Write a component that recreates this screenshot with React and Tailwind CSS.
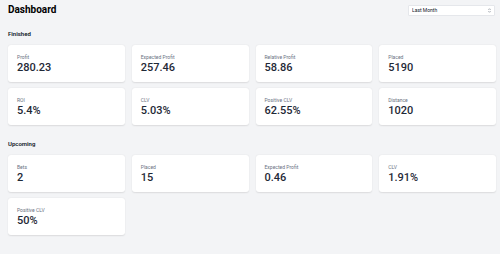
import { useState } from "react";

const finished = [
  { label: "Profit", value: "280.23" },
  { label: "Expected Profit", value: "257.46" },
  { label: "Relative Profit", value: "58.86" },
  { label: "Placed", value: "5190" },
  { label: "ROI", value: "5.4%" },
  { label: "CLV", value: "5.03%" },
  { label: "Positive CLV", value: "62.55%" },
  { label: "Distance", value: "1020" },
];

const upcoming = [
  { label: "Bets", value: "2" },
  { label: "Placed", value: "15" },
  { label: "Expected Profit", value: "0.46" },
  { label: "CLV", value: "1.91%" },
  { label: "Positive CLV", value: "50%" },
];

function StatCard({ label, value }) {
  return (
    <div className="h-[37px] bg-white rounded-[3px] shadow-[0_0.5px_1.5px_rgba(0,0,0,0.1)] px-[9px] flex flex-col justify-center">
      <div className="text-[5px] leading-[7px] text-gray-500">{label}</div>
      <div className="text-[11px] leading-[13px] font-medium text-[#1f2937]">
        {value}
      </div>
    </div>
  );
}

function Section({ title, stats }) {
  return (
    <div>
      <h2 className="text-[6px] leading-[8px] font-semibold text-gray-900 mb-[7px]">
        {title}
      </h2>
      <div className="grid grid-cols-4 gap-[6px] gap-x-[7px]">
        {stats.map((s, i) => (
          <StatCard key={i} label={s.label} value={s.value} />
        ))}
      </div>
    </div>
  );
}

export default function App() {
  const [range, setRange] = useState("Last Month");

  return (
    <div className="min-h-screen bg-gray-100 pl-2 pr-1 pt-[3px] font-['Roboto',sans-serif] leading-none">
      <div className="flex items-center justify-between h-[14px]">
        <h1 className="text-[10px] leading-[14px] font-bold text-black">
          Dashboard
        </h1>
        <div className="relative flex mr-[1px]">
          <select
            value={range}
            onChange={(e) => setRange(e.target.value)}
            className="appearance-none block w-[87px] h-[11px] bg-white border border-gray-200 rounded-[1px] pl-[3px] py-0 text-[5px] leading-[9px] text-gray-900 outline-none"
          >
            <option>Last Week</option>
            <option>Last Month</option>
            <option>Last Year</option>
          </select>
          <svg
            className="absolute right-[4px] top-[3px] pointer-events-none"
            width="3"
            height="5"
            viewBox="0 0 6 10"
            fill="none"
            stroke="#6b7280"
            strokeWidth="1.4"
          >
            <path d="M1 3.5 L3 1.5 L5 3.5" />
            <path d="M1 6.5 L3 8.5 L5 6.5" />
          </svg>
        </div>
      </div>

      <div className="mt-[13px] flex flex-col gap-[15px]">
        <Section title="Finished" stats={finished} />
        <Section title="Upcoming" stats={upcoming} />
      </div>
    </div>
  );
}
